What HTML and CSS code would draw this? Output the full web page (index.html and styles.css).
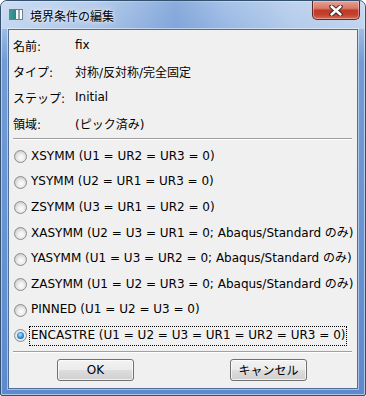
FILE: index.html
```html
<!DOCTYPE html>
<html lang="ja">
<head>
    <meta charset="UTF-8">
    <meta name="viewport" content="width=device-width, initial-scale=1.0">
    <title>境界条件の編集</title>
    <link rel="stylesheet" href="styles.css">
</head>
<body>
    <div class="window">
        <div class="titlebar">
            <span class="app-icon"><span class="app-icon-pane"></span></span>
            <span class="title">境界条件の編集</span>
            <div class="close-button">
                <svg width="14" height="11" viewBox="0 0 14 11">
                    <path d="M2.5 1.5 L11.5 9.5 M11.5 1.5 L2.5 9.5" stroke="#3b2a2a" stroke-width="4.4" stroke-linecap="round"/>
                    <path d="M2.5 1.5 L11.5 9.5 M11.5 1.5 L2.5 9.5" stroke="#ffffff" stroke-width="2.4" stroke-linecap="round"/>
                </svg>
            </div>
        </div>

        <div class="client">
            <div class="info">
                <div class="info-row"><span class="info-label">名前:</span><span>fix</span></div>
                <div class="info-row"><span class="info-label">タイプ:</span><span>対称/反対称/完全固定</span></div>
                <div class="info-row"><span class="info-label">ステップ:</span><span>Initial</span></div>
                <div class="info-row"><span class="info-label">領域:</span><span>(ピック済み)</span></div>
            </div>

            <div class="separator"></div>

            <div class="options">
                <div class="option"><span class="radio"></span><span class="option-text">XSYMM (U1 = UR2 = UR3 = 0)</span></div>
                <div class="option"><span class="radio"></span><span class="option-text">YSYMM (U2 = UR1 = UR3 = 0)</span></div>
                <div class="option"><span class="radio"></span><span class="option-text">ZSYMM (U3 = UR1 = UR2 = 0)</span></div>
                <div class="option"><span class="radio"></span><span class="option-text">XASYMM (U2 = U3 = UR1 = 0; Abaqus/Standard のみ)</span></div>
                <div class="option"><span class="radio"></span><span class="option-text">YASYMM (U1 = U3 = UR2 = 0; Abaqus/Standard のみ)</span></div>
                <div class="option"><span class="radio"></span><span class="option-text">ZASYMM (U1 = U2 = UR3 = 0; Abaqus/Standard のみ)</span></div>
                <div class="option"><span class="radio"></span><span class="option-text">PINNED (U1 = U2 = U3 = 0)</span></div>
                <div class="option"><span class="radio checked"></span><span class="option-text focused">ENCASTRE (U1 = U2 = U3 = UR1 = UR2 = UR3 = 0)</span></div>
            </div>

            <div class="separator separator-bottom"></div>

            <div class="button-row">
                <button class="dialog-button">OK</button>
                <button class="dialog-button">キャンセル</button>
            </div>
        </div>
    </div>
</body>
</html>
```

FILE: styles.css
```css
body {
    margin: 0;
    background-color: #ffffff;
    font-family: 'DejaVu Sans', 'Noto Sans CJK JP', sans-serif;
    font-size: 12px;
    color: #000;
}

.window {
    width: 366px;
    height: 396px;
    box-sizing: border-box;
    border: 1px solid #34506f;
    border-radius: 7px 7px 2px 2px;
    padding: 0 7px 6px 7px;
    display: flex;
    flex-direction: column;
    background: linear-gradient(to bottom, #b4cbea 0px, #9fbbe4 28px, #739cd6 60px, #5e8acd 100%);
    box-shadow: inset 0 0 0 1px rgba(255, 255, 255, 0.5);
}

.titlebar {
    height: 28px;
    flex-shrink: 0;
    margin: 0 -7px;
    padding-left: 8px;
    display: flex;
    align-items: flex-start;
    border-radius: 6px 6px 0 0;
    background: linear-gradient(to right, rgba(214, 228, 245, 0.7) 0%, rgba(190, 212, 239, 0.4) 25%, rgba(105, 148, 210, 0.55) 48%, rgba(140, 178, 226, 0.35) 62%, rgba(200, 218, 240, 0.5) 80%, rgba(215, 228, 245, 0.6) 100%);
}

.app-icon {
    width: 14px;
    height: 11px;
    margin-top: 8px;
    box-sizing: border-box;
    border: 1px solid #6f7f88;
    background: linear-gradient(to right, #3f9b8a 0%, #2f7f8f 50%, #f4f6f8 50%, #ffffff 100%);
    display: flex;
}

.app-icon-pane {
    width: 2px;
    margin-left: 8px;
    background-color: #8fa3b0;
}

.title {
    margin-left: 7px;
    margin-top: 6px;
    font-family: 'Noto Sans CJK JP', sans-serif;
    font-size: 12px;
    line-height: 17px;
    color: #000;
    text-shadow: 0 0 6px rgba(255, 255, 255, 0.95), 0 0 2px rgba(255, 255, 255, 0.9);
}

.close-button {
    margin-left: auto;
    margin-right: 5px;
    width: 48px;
    height: 19px;
    box-sizing: border-box;
    border: 1px solid #5f2a25;
    border-top: none;
    border-radius: 0 0 5px 5px;
    background: linear-gradient(to bottom, #e6a093 0%, #d87a69 40%, #c23a27 52%, #c2412d 75%, #d46a55 100%);
    box-shadow: inset 0 0 0 1px rgba(255, 220, 210, 0.45);
    display: flex;
    align-items: center;
    justify-content: center;
}

.client {
    flex: 1;
    box-sizing: border-box;
    border: 1px solid #4f6f99;
    background-color: #f0f0f0;
    padding: 2px 5px 0 4px;
    display: flex;
    flex-direction: column;
    box-shadow: 0 0 0 1px rgba(255, 255, 255, 0.45);
}

.info-row {
    height: 26px;
    display: flex;
    align-items: center;
}

.info-label {
    width: 62px;
    flex-shrink: 0;
}

.separator {
    height: 1px;
    margin-top: 2px;
    background-color: #a0a0a0;
    border-bottom: 1px solid #ffffff;
}

.options {
    margin-top: 4px;
}

.option {
    height: 25.6px;
    display: flex;
    align-items: center;
    white-space: nowrap;
}

.radio {
    width: 13px;
    height: 13px;
    margin-left: 1px;
    box-sizing: border-box;
    border-radius: 50%;
    border: 1px solid #8b8d8f;
    background: radial-gradient(circle at 55% 60%, #fdfdfd 0%, #eeeeee 35%, #d2d2d2 70%, #c4c4c4 100%);
    flex-shrink: 0;
    position: relative;
}

.radio.checked {
    background: radial-gradient(circle at 50% 50%, #f4f4f4 0%, #e8e8e8 60%, #d0d0d0 100%);
}

.radio.checked::after {
    content: '';
    position: absolute;
    left: 2px;
    top: 2px;
    width: 7px;
    height: 7px;
    border-radius: 50%;
    background: radial-gradient(circle at 45% 40%, #b8eaff 0%, #3fa4e6 40%, #1a5fae 80%, #17457f 100%);
}

.option-text {
    margin-left: 2px;
    padding: 1px 1px 2px 1px;
    border: 1px solid transparent;
    line-height: 15px;
}

.option-text.focused {
    border: 1px dotted #000;
}

.separator-bottom {
    margin-top: 2px;
}

.button-row {
    display: flex;
    gap: 96px;
    padding-left: 44px;
    margin-top: 6px;
}

.dialog-button {
    width: 77px;
    height: 22px;
    padding: 0;
    box-sizing: border-box;
    border: 1px solid #707070;
    border-radius: 3px;
    font-family: 'DejaVu Sans', 'Noto Sans CJK JP', sans-serif;
    font-size: 12px;
    color: #000;
    background: linear-gradient(to bottom, #f2f2f2 0%, #ebebeb 48%, #dddddd 52%, #cfcfcf 100%);
    box-shadow: inset 0 0 0 1px rgba(255, 255, 255, 0.7);
}
```
